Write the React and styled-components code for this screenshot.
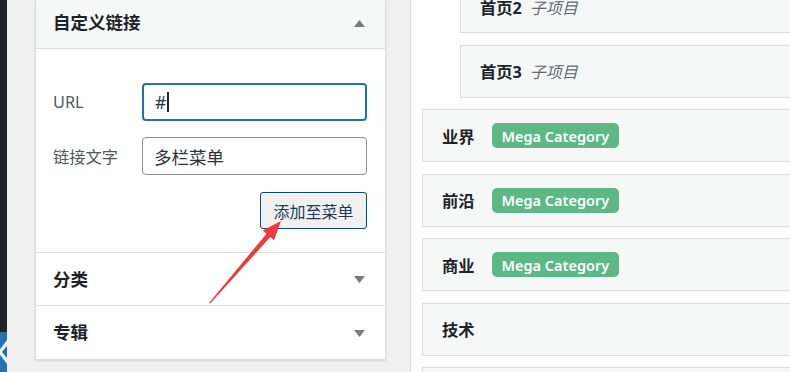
import React from 'react';
import styled, { createGlobalStyle } from 'styled-components';

const GlobalStyle = createGlobalStyle`
  html, body {
    margin: 0;
    padding: 0;
    background: #f0f0f1;
  }
  body {
    font-family: "Noto Sans", "Noto Sans CJK SC", sans-serif;
    color: #2c3338;
  }
`;

const menuItems = [
  { title: '首页2', sub: true },
  { title: '首页3', sub: true },
  { title: '业界', badge: 'Mega Category' },
  { title: '前沿', badge: 'Mega Category' },
  { title: '商业', badge: 'Mega Category' },
  { title: '技术' },
  { title: '' },
];

const Triangle = ({ up }) => (
  <svg width="11" height="7" viewBox="0 0 11 7">
    <polygon points={up ? '5.5,0 11,7 0,7' : '0,0 11,0 5.5,7'} fill="#787c82" />
  </svg>
);

const MenuRow = ({ title, sub, badge }) => (
  <ItemBox sub={sub}>
    <ItemTitle>{title}</ItemTitle>
    {sub && <ItemType>子项目</ItemType>}
    {badge && <Badge>{badge}</Badge>}
  </ItemBox>
);

const App = () => (
  <Screen>
    <GlobalStyle />
    <AdminStrip>
      <CollapseButton>
        <svg width="7" height="40" viewBox="0 0 7 40">
          <polygon points="7,8 7,14 2,20 7,26 7,32 -2,20" fill="#e6f0f8" />
        </svg>
      </CollapseButton>
    </AdminStrip>

    <SideColumn>
      <Panel>
        <PanelHeader>
          <PanelTitle>自定义链接</PanelTitle>
          <Triangle up />
        </PanelHeader>
        <PanelBody>
          <FieldRow>
            <FieldLabel>URL</FieldLabel>
            <TextBox focused>#<Caret /></TextBox>
          </FieldRow>
          <FieldRow>
            <FieldLabel>链接文字</FieldLabel>
            <TextBox>多栏菜单</TextBox>
          </FieldRow>
          <ButtonRow>
            <AddButton>添加至菜单</AddButton>
          </ButtonRow>
        </PanelBody>
        <SectionRow>
          <PanelTitle>分类</PanelTitle>
          <Triangle />
        </SectionRow>
        <SectionRow last>
          <PanelTitle>专辑</PanelTitle>
          <Triangle />
        </SectionRow>
      </Panel>
    </SideColumn>

    <MenuArea>
      <MenuList>
        {menuItems.map((item, i) => (
          <MenuRow key={i} {...item} />
        ))}
      </MenuList>
    </MenuArea>

    <Annotation width="790" height="372" viewBox="0 0 790 372">
      <polygon
        points="209,303 266.5,233.7 262.8,230.4 281,221 274,240.2 270.3,237 210.2,303.6"
        fill="#ef3a3a"
      />
    </Annotation>
  </Screen>
);

const Screen = styled.div`
  position: relative;
  display: flex;
  width: 790px;
  height: 372px;
  overflow: hidden;
  background: #f0f0f1;
`;

const AdminStrip = styled.div`
  flex: 0 0 7px;
  display: flex;
  flex-direction: column;
  justify-content: flex-end;
  background: #1d2327;
`;

const CollapseButton = styled.div`
  height: 40px;
  background: #2271b1;
  display: flex;
`;

const SideColumn = styled.div`
  flex: 0 0 351px;
  margin-left: 28px;
  margin-right: 24px;
`;

const Panel = styled.div`
  margin-top: -1px;
  background: #fff;
  border: 1px solid #dcdcde;
  box-shadow: 0 1px 2px rgba(0, 0, 0, 0.12);
`;

const PanelHeader = styled.div`
  height: 49px;
  display: flex;
  align-items: center;
  justify-content: space-between;
  padding: 0 20px 2px 17px;
  box-sizing: border-box;
  background: #f6f7f7;
  border-bottom: 1px solid #dcdcde;
`;

const PanelTitle = styled.h3`
  margin: 0;
  font-size: 17.5px;
  font-weight: 700;
  line-height: 1;
  color: #1d2327;
`;

const PanelBody = styled.div`
  padding: 34px 18px 23px 17px;
  border-bottom: 1px solid #dcdcde;
  display: flex;
  flex-direction: column;
  gap: 16px;
`;

const FieldRow = styled.div`
  display: flex;
  align-items: center;
`;

const FieldLabel = styled.label`
  flex: 0 0 89px;
  font-size: 16.25px;
  color: #50575e;
`;

const TextBox = styled.div`
  flex: 1;
  box-sizing: border-box;
  height: 38px;
  display: flex;
  align-items: center;
  padding: 0 11px;
  border: ${(p) => (p.focused ? '2px solid #2271b1' : '1px solid #8c8f94')};
  border-radius: 4px;
  background: #fff;
  font-size: 17.5px;
  color: #2c3338;
`;

const Caret = styled.span`
  display: inline-block;
  width: 1.5px;
  height: 20px;
  margin-left: 1px;
  background: #1d2327;
`;

const ButtonRow = styled.div`
  display: flex;
  justify-content: flex-end;
  margin-top: 1px;
`;

const AddButton = styled.button`
  box-sizing: border-box;
  width: 107px;
  height: 37px;
  padding: 0;
  border: 1px solid #0a4b78;
  border-radius: 3px;
  background: #f0f0f1;
  color: #1d3c58;
  font-family: inherit;
  font-size: 16px;
`;

const SectionRow = styled.div`
  height: 53px;
  display: flex;
  align-items: center;
  justify-content: space-between;
  padding: 1px 20px 0 17px;
  box-sizing: border-box;
  border-bottom: ${(p) => (p.last ? 'none' : '1px solid #dcdcde')};
`;

const MenuArea = styled.div`
  flex: 1;
  background: #fff;
  border-left: 1px solid #dcdcde;
  padding-left: 11px;
`;

const MenuList = styled.div`
  margin-top: -20px;
  display: flex;
  flex-direction: column;
  gap: 11.5px;
`;

const ItemBox = styled.div`
  box-sizing: border-box;
  height: 53px;
  margin-left: ${(p) => (p.sub ? '38px' : '0')};
  width: 420px;
  display: flex;
  align-items: center;
  padding-left: 19px;
  background: #f6f7f7;
  border: 1px solid #dcdcde;
`;

const ItemTitle = styled.span`
  font-size: 16.25px;
  font-weight: 700;
  color: #1d2327;
`;

const ItemType = styled.span`
  margin-left: 8px;
  font-size: 16px;
  font-style: italic;
  color: #646970;
`;

const Badge = styled.span`
  margin-left: 17px;
  height: 25px;
  display: inline-flex;
  align-items: center;
  padding: 0 10px;
  border-radius: 5px;
  background: #5cb887;
  color: #fff;
  font-size: 14.5px;
  font-weight: 600;
`;

const Annotation = styled.svg`
  position: absolute;
  left: 0;
  top: 0;
  pointer-events: none;
`;

export default App;
